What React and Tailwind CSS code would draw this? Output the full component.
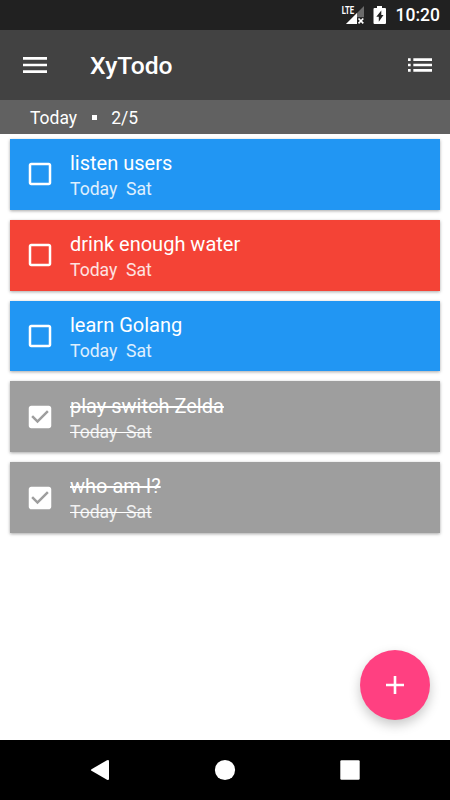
const todos = [
  { id: 1, title: "listen users", color: "bg-[#2196f3]", done: false },
  { id: 2, title: "drink enough water", color: "bg-[#f44336]", done: false },
  { id: 3, title: "learn Golang", color: "bg-[#2196f3]", done: false },
  { id: 4, title: "play switch Zelda", color: "bg-[#9e9e9e]", done: true },
  { id: 5, title: "who am I?", color: "bg-[#9e9e9e]", done: true },
];

function StatusBar() {
  return (
    <div className="flex h-[30px] shrink-0 items-center justify-end bg-[#212121] pr-[10px] text-white">
      <svg className="mr-[9px] h-[30px] w-[26px]" viewBox="0 0 26 30">
        <path d="M26 6v18H8z" fill="#6b6b6b" />
        <path d="M19 13v11H8z" fill="#fff" />
        <path d="M19 17.200h7v7h-7z" fill="#212121" />
        <path d="M20.500 18.500l4.800 4.800M25.300 18.500L20.500 23.300" stroke="#fff" strokeWidth="1.700" />
        <text x="3.800" y="14" fill="#fff" fontSize="11" fontWeight="700" fontFamily="Roboto, sans-serif" textLength="12.400" lengthAdjust="spacingAndGlyphs">LTE</text>
      </svg>
      <svg className="mr-[8.600px] h-[30px] w-[14px]" viewBox="0 0 14 30">
        <path d="M4 6h5v2h3q1 0 1 1v14q0 1-1 1H1.500q-1 0-1-1V9q0-1 1-1H4z" fill="#fff" />
        <path d="M8.300 10.500v4.500h2.200L5.800 21.700v-4.900H3.300z" fill="#212121" />
      </svg>
      <span className="relative top-px text-[17.5px] leading-none font-medium">10:20</span>
    </div>
  );
}

function Header() {
  return (
    <header className="flex h-[70px] shrink-0 items-center bg-[#424242] pr-[14px] pl-[19px] text-white">
      <svg className="size-8" viewBox="0 0 24 24" fill="currentColor">
        <path d="M3 18h18v-2H3v2zm0-5h18v-2H3v2zm0-7v2h18V6H3z" />
      </svg>
      <h1 className="ml-[39px] flex-1 pt-[2px] text-[24.700px] font-medium">XyTodo</h1>
      <svg className="size-8" viewBox="0 0 24 24" fill="currentColor">
        <path d="M3 13h2v-2H3v2zm0 4h2v-2H3v2zm0-8h2V7H3v2zm4 4h14v-2H7v2zm0 4h14v-2H7v2zM7 7v2h14V7H7z" />
      </svg>
    </header>
  );
}

function Checkbox({ checked }) {
  return (
    <svg className="size-[30px] shrink-0" viewBox="0 0 24 24" fill="#fff">
      {checked ? (
        <path d="M19 3H5c-1.110 0-2 .9-2 2v14c0 1.100.89 2 2 2h14c1.110 0 2-.9 2-2V5c0-1.100-.89-2-2-2zm-9 14l-5-5 1.410-1.410L10 14.170l7.590-7.590L19 8l-9 9z" />
      ) : (
        <path d="M19 5v14H5V5h14m0-2H5c-1.100 0-2 .9-2 2v14c0 1.100.9 2 2 2h14c1.100 0 2-.9 2-2V5c0-1.100-.9-2-2-2z" />
      )}
    </svg>
  );
}

function TodoItem({ todo }) {
  return (
    <li className={`flex h-[70.8px] items-center pl-[15px] text-white shadow-[0_1px_3px_rgba(0,0,0,0.35)] ${todo.color}`}>
      <Checkbox checked={todo.done} />
      <div className={`ml-[15px] pt-[4.800px] whitespace-pre ${todo.done ? "line-through" : ""}`}>
        <p className="text-[20px] leading-[26px]">{todo.title}</p>
        <p className="text-[17.600px] leading-[27px] text-white/85">{"Today  Sat"}</p>
      </div>
    </li>
  );
}

function NavBar() {
  return (
    <nav className="flex h-[60px] shrink-0 items-center justify-between bg-black px-[85px]">
      <svg className="size-[30px]" viewBox="0 0 30 30" fill="#fff">
        <path d="M6.500 14.200L22 5.200q2-.8 2 1v17.600q0 1.800-2 1L6.500 15.800q-1.200-.8 0-1.600z" />
      </svg>
      <svg className="size-[30px]" viewBox="0 0 30 30" fill="#fff">
        <circle cx="15" cy="15" r="10.100" />
      </svg>
      <svg className="size-[30px]" viewBox="0 0 30 30" fill="#fff">
        <rect x="5.300" y="5.300" width="19.400" height="19.400" rx="1.200" />
      </svg>
    </nav>
  );
}

export default function App() {
  const doneCount = todos.filter((t) => t.done).length;

  return (
    <div className="relative flex h-[800px] w-[450px] flex-col overflow-hidden bg-white font-[Roboto,sans-serif]">
      <StatusBar />
      <Header />
      <div className="flex h-[33.5px] shrink-0 items-center bg-[#616161] pt-[2px] pl-[30px] text-[17.5px] text-white">
        <span>Today</span>
        <span className="mx-[14.500px] size-[5px] bg-white" />
        <span>{doneCount}/{todos.length}</span>
      </div>
      <ul className="flex flex-1 flex-col gap-[10px] px-[10px] pt-[5.500px]">
        {todos.map((todo) => (
          <TodoItem key={todo.id} todo={todo} />
        ))}
      </ul>
      <button className="absolute top-[650px] left-[360px] flex size-[70px] items-center justify-center rounded-full bg-[#ff4081] shadow-[0_5px_12px_rgba(0,0,0,0.22)]">
        <svg className="size-[18px]" viewBox="0 0 18 18" fill="#fff">
          <path d="M7.700 0h2.600v7.700H18v2.600h-7.700V18H7.700v-7.700H0V7.700h7.700z" />
        </svg>
      </button>
      <NavBar />
    </div>
  );
}
